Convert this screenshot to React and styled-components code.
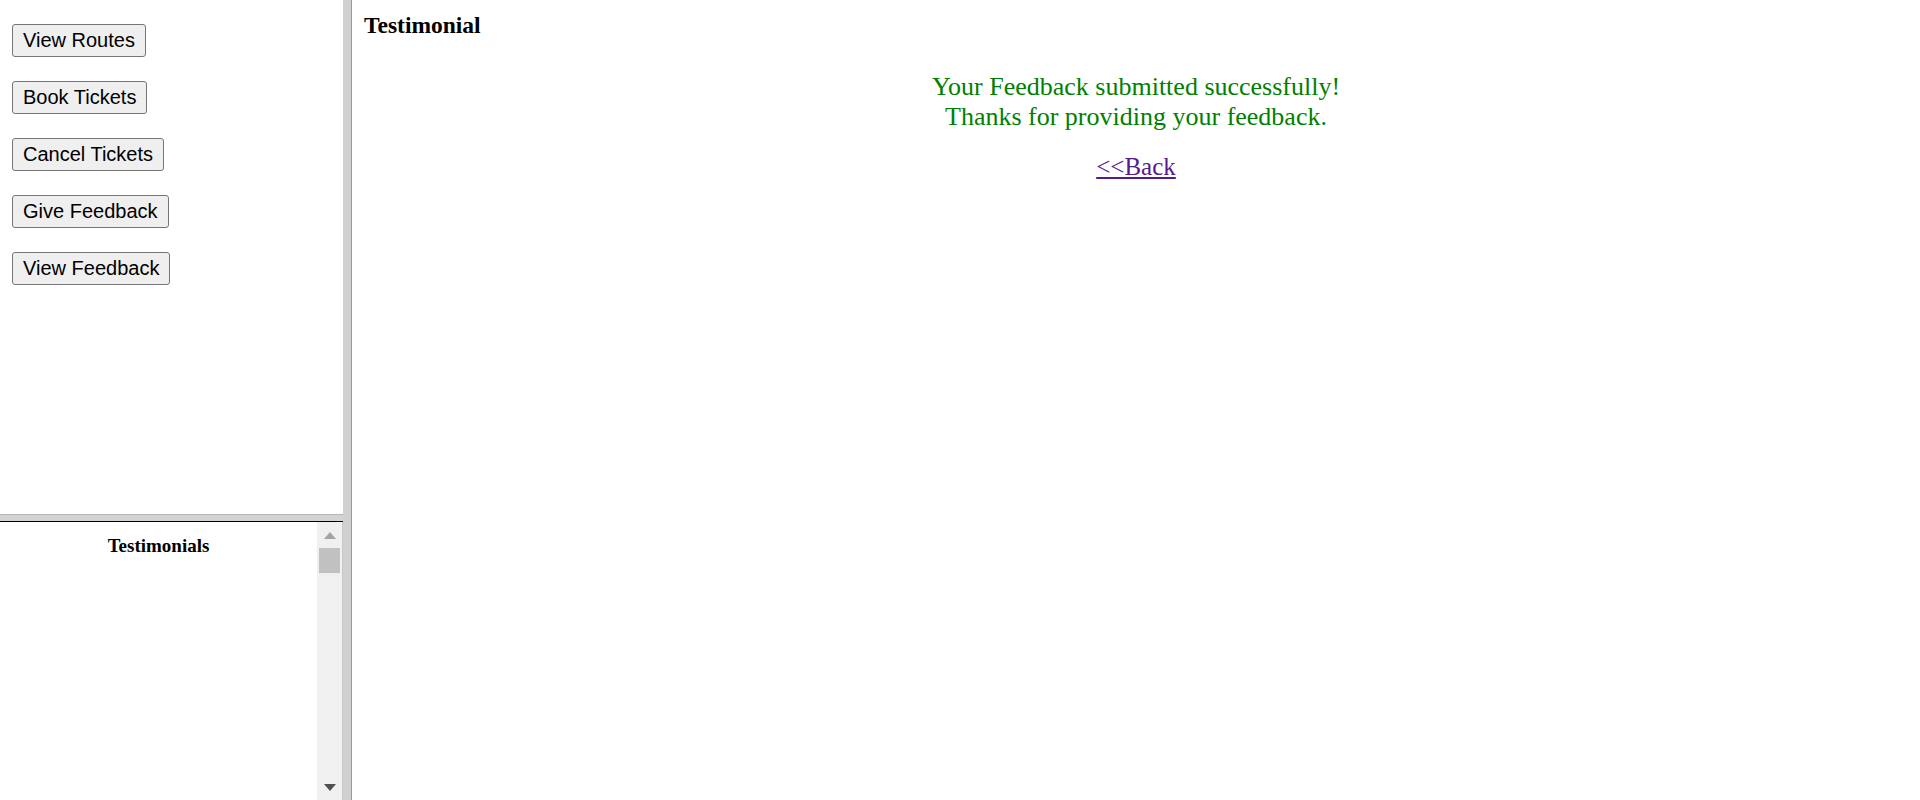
import styled, { createGlobalStyle } from 'styled-components';

const Global = createGlobalStyle`
    html, body {
        margin: 0;
        padding: 0;
        background: white;
    }
`;

const Frameset = styled.div`
    width: 1920px;
    height: 800px;
    display: flex;
    flex-direction: row;
    overflow: hidden;
    font-family: "Liberation Serif", "Times New Roman", serif;
`;

const LeftColumn = styled.div`
    width: 343px;
    display: flex;
    flex-direction: column;
`;

const MenuFrame = styled.div`
    height: 514px;
    display: flex;
    flex-direction: column;
    align-items: flex-start;
    gap: 24px;
    padding: 24px 0 0 12px;
    box-sizing: border-box;
`;

const MenuButton = styled.button`
    font-family: "Liberation Sans", Arial, sans-serif;
    font-size: 20px;
    line-height: 23px;
    color: black;
    background: #efefef;
    border: 1px solid #767676;
    border-radius: 3px;
    padding: 4px 10px;
    margin: 0;
`;

const HSplit = styled.div`
    height: 8px;
    background: #d3d3d3;
    border-top: 1px solid #b4b4b4;
    border-bottom: 1px solid #000;
    box-sizing: border-box;
`;

const BottomFrame = styled.div`
    flex: 1;
    display: flex;
    flex-direction: row;
`;

const BottomContent = styled.div`
    flex: 1;
    padding-top: 13px;
    text-align: center;
`;

const SmallHeading = styled.div`
    font-size: 19px;
    font-weight: bold;
`;

const Scrollbar = styled.div`
    width: 25px;
    background: #f0f0f0;
    border-right: 1px solid #c8c8c8;
    display: flex;
    flex-direction: column;
    align-items: center;
`;

const ArrowBox = styled.div`
    height: 26px;
    width: 100%;
    display: flex;
    align-items: center;
    justify-content: center;
`;

const Thumb = styled.div`
    width: 21px;
    height: 25px;
    background: #c1c1c1;
`;

const Track = styled.div`
    flex: 1;
`;

const VSplit = styled.div`
    width: 9px;
    background: #d0d0d0;
    border-right: 1px solid #9a9a9a;
    box-sizing: border-box;
`;

const MainFrame = styled.div`
    flex: 1;
    padding: 12px 12px 0 12px;
    box-sizing: border-box;
`;

const Heading = styled.div`
    font-size: 23.5px;
    font-weight: bold;
`;

const Message = styled.div`
    margin-top: 33px;
    text-align: center;
    color: green;
    font-size: 26px;
`;

const BackLink = styled.a`
    display: inline-block;
    margin-top: 21px;
    color: #551a8b;
    font-size: 25px;
    text-decoration: underline;
`;

const Arrow = ({ down, color }) => (
    <svg width="12" height="7" viewBox="0 0 12 7">
        {down
            ? <polygon points="0,0 12,0 6,7" fill={color} />
            : <polygon points="6,0 12,7 0,7" fill={color} />}
    </svg>
);

const menu = ['View Routes', 'Book Tickets', 'Cancel Tickets', 'Give Feedback', 'View Feedback'];

export default () => {
    return (
        <Frameset>
            <Global />
            <LeftColumn>
                <MenuFrame>
                    {menu.map((m) => <MenuButton key={m}>{m}</MenuButton>)}
                </MenuFrame>
                <HSplit />
                <BottomFrame>
                    <BottomContent>
                        <SmallHeading>Testimonials</SmallHeading>
                    </BottomContent>
                    <Scrollbar>
                        <ArrowBox><Arrow color="#a3a3a3" /></ArrowBox>
                        <Thumb />
                        <Track />
                        <ArrowBox><Arrow down color="#505050" /></ArrowBox>
                    </Scrollbar>
                </BottomFrame>
            </LeftColumn>
            <VSplit />
            <MainFrame>
                <Heading>Testimonial</Heading>
                <Message>
                    Your Feedback submitted successfully!<br />
                    Thanks for providing your feedback.<br />
                    <BackLink href="#">&lt;&lt;Back</BackLink>
                </Message>
            </MainFrame>
        </Frameset>
    )
}
